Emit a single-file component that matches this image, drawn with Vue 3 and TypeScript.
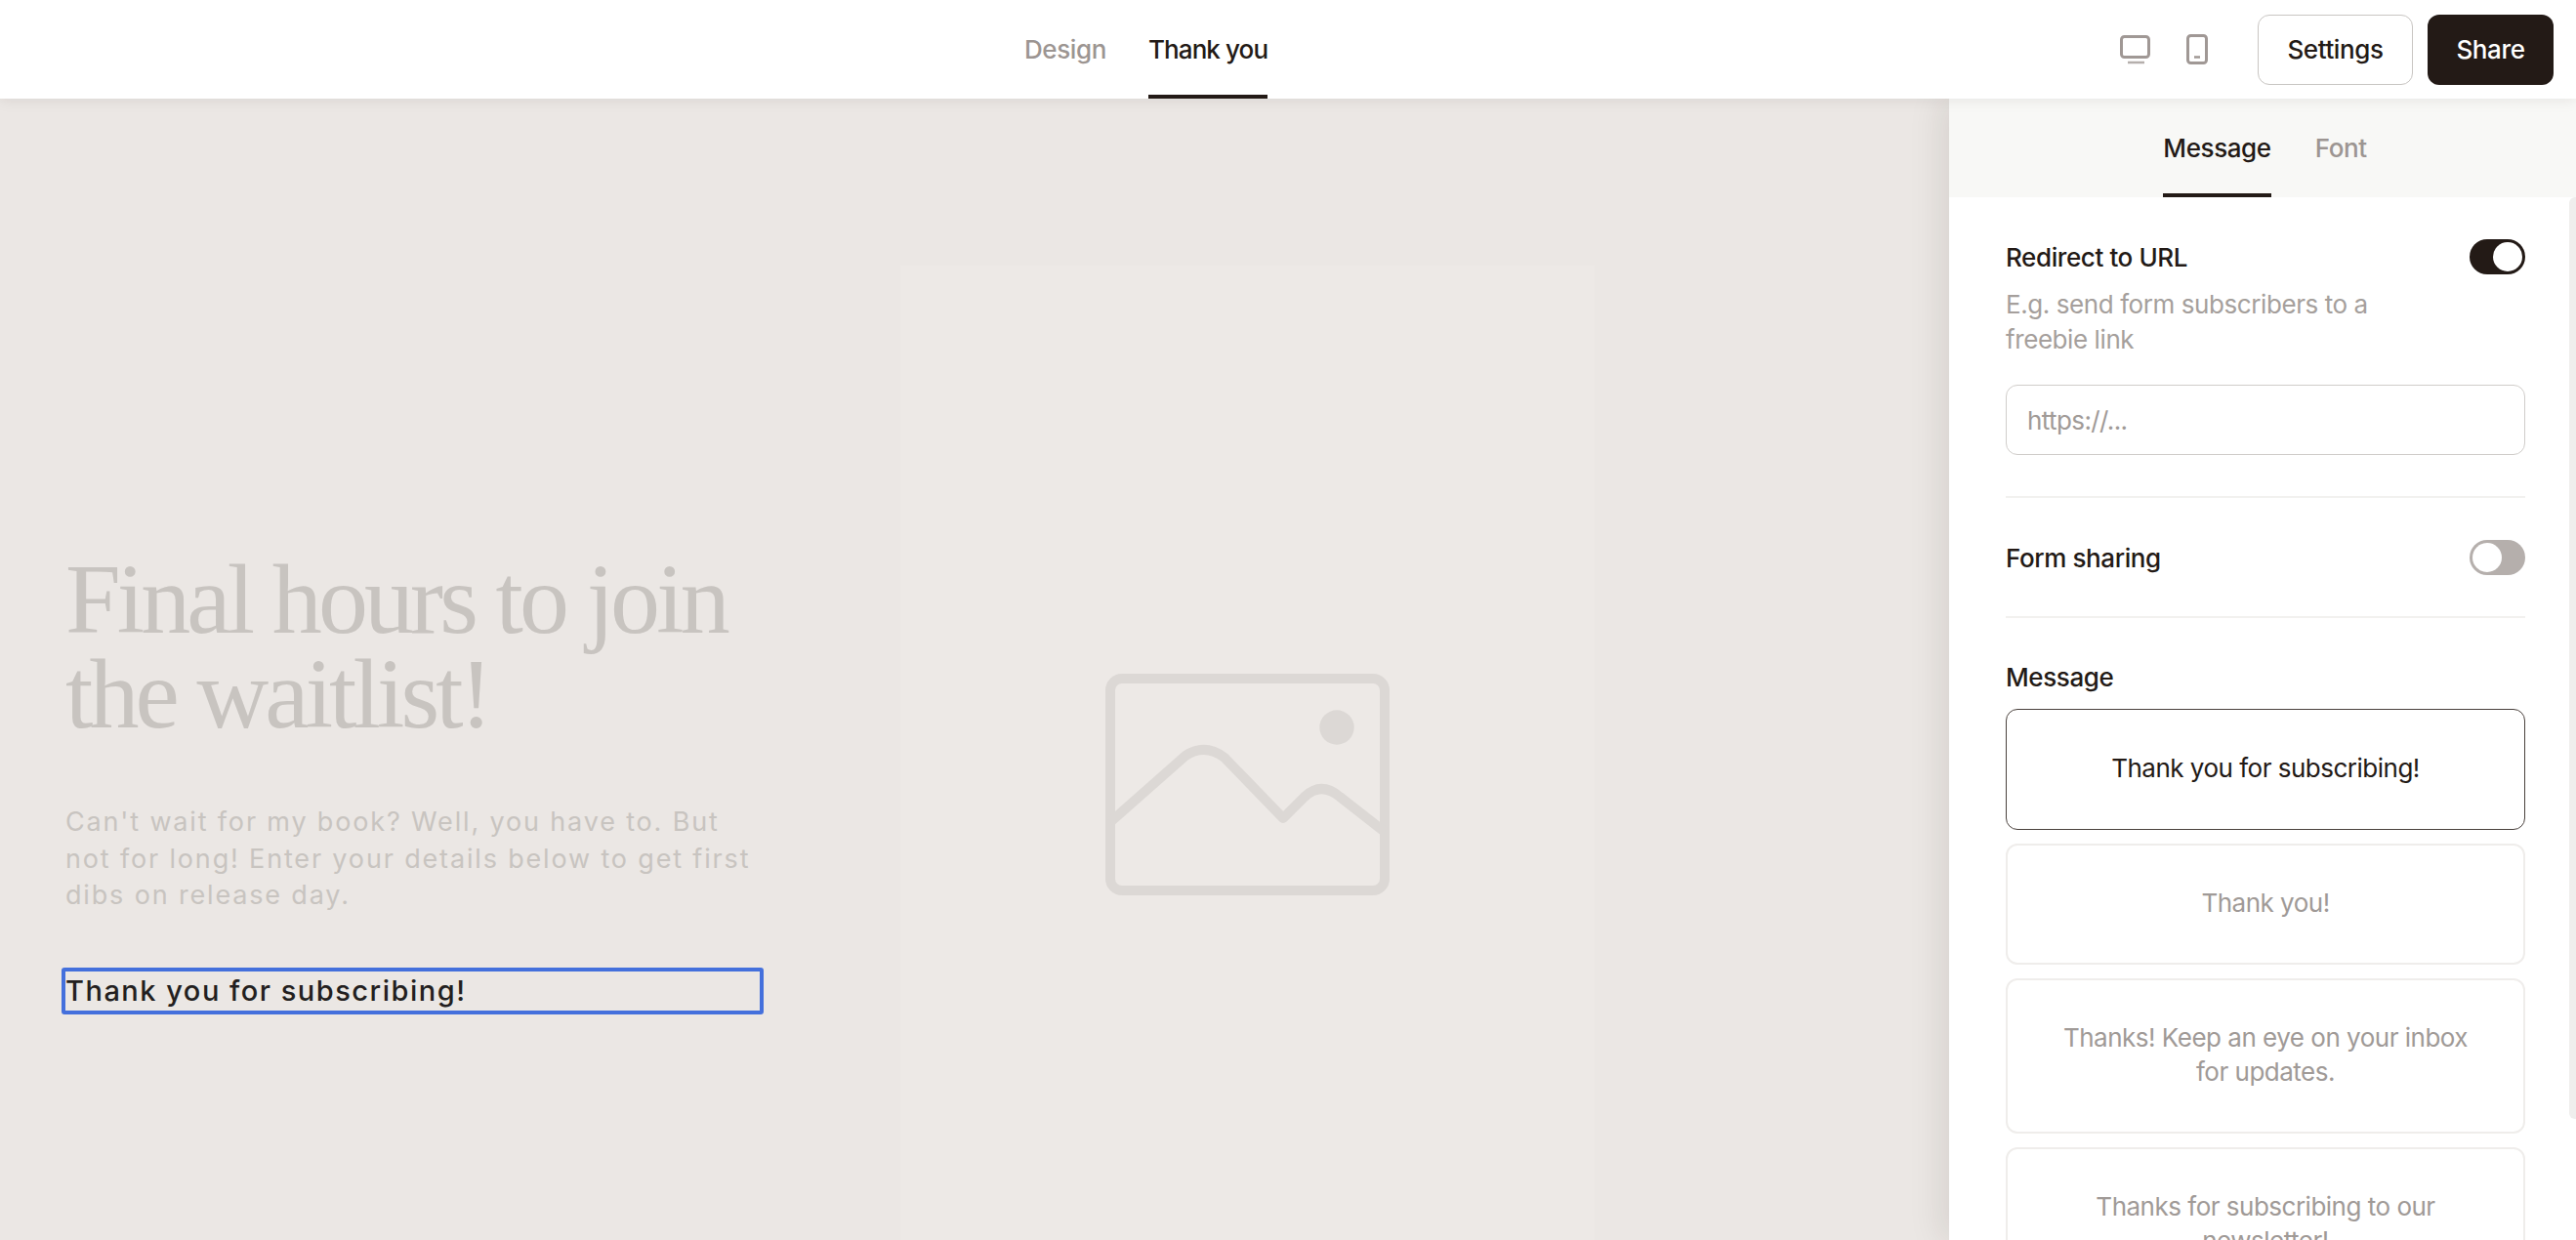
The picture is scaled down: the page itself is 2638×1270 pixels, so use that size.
<script setup lang="ts">
import { ref } from 'vue'

interface MessageOption {
  text: string
  active?: boolean
}

const redirect = ref(true)
const sharing = ref(false)

const options: MessageOption[] = [
  { text: 'Thank you for subscribing!', active: true },
  { text: 'Thank you!' },
  { text: 'Thanks! Keep an eye on your inbox for updates.' },
  { text: 'Thanks for subscribing to our newsletter!' },
]
</script>

<template>
  <div class="page">
    <header class="topbar">
      <nav class="tabs">
        <span class="tab">Design</span>
        <span class="tab tab--active">Thank you</span>
      </nav>
      <div class="actions">
        <svg class="device device--desktop" width="32" height="30" viewBox="0 0 32 30" fill="none">
          <rect x="1.5" y="1.5" width="28" height="21" rx="3" stroke="#a09895" stroke-width="3" />
          <path d="M8 28h17" stroke="#b5afac" stroke-width="2.5" />
        </svg>
        <svg class="device device--phone" width="22" height="31" viewBox="0 0 22 31" fill="none">
          <rect x="1.5" y="1.5" width="19" height="28" rx="3" stroke="#a09895" stroke-width="3" />
          <path d="M8 23.5h6" stroke="#a09895" stroke-width="2.5" />
        </svg>
        <button class="btn btn--ghost" type="button">Settings</button>
        <button class="btn btn--solid" type="button">Share</button>
      </div>
    </header>

    <main class="body">
      <section class="canvas">
        <div class="copy">
          <h1 class="headline">Final hours to join the waitlist!</h1>
          <p class="lead">Can't wait for my book? Well, you have to. But not for long! Enter your details below to get first dibs on release day.</p>
          <div class="thanks">Thank you for subscribing!</div>
        </div>
        <div class="photo">
          <svg width="291" height="227" viewBox="0 0 291 227" fill="none" stroke="#dcd8d5" stroke-width="10" stroke-linejoin="round">
            <rect x="5" y="5" width="281" height="217" rx="12" />
            <path d="M5 152 L82 84 Q102 71 122 86 L182 148 L204 126 Q221 110 240 126 L286 162" />
            <circle cx="237" cy="55" r="17.7" fill="#dcd8d5" stroke="none" />
          </svg>
        </div>
      </section>

      <aside class="panel">
        <div class="panel-tabs">
          <span class="tab tab--active tab--panel">Message</span>
          <span class="tab tab--panel">Font</span>
        </div>
        <div class="panel-scroll">
          <div class="panel-content">
            <div class="row">
              <span class="label">Redirect to URL</span>
              <span class="toggle" :class="{ 'toggle--on': redirect }"></span>
            </div>
            <p class="hint">E.g. send form subscribers to a freebie link</p>
            <input class="url" type="text" placeholder="https://..." />
            <hr class="rule" />
            <div class="row">
              <span class="label">Form sharing</span>
              <span class="toggle" :class="{ 'toggle--on': sharing }"></span>
            </div>
            <hr class="rule" />
            <div class="label label--block">Message</div>
            <div class="options">
              <div
                v-for="option in options"
                :key="option.text"
                class="option"
                :class="{ 'option--active': option.active }"
              >
                <span>{{ option.text }}</span>
              </div>
            </div>
          </div>
          <div class="scrollbar"></div>
        </div>
      </aside>
    </main>
  </div>
</template>

<style>
html,
body {
  margin: 0;
  overflow: hidden;
}
</style>

<style scoped>
.page {
  display: flex;
  flex-direction: column;
  height: 100vh;
  overflow: hidden;
  background: #fff;
  color: #231a16;
  font-family: Inter, 'Liberation Sans', sans-serif;
  font-size: 26px;
}

/* top bar */
.topbar {
  position: relative;
  z-index: 3;
  display: flex;
  align-items: center;
  flex: none;
  height: 101px;
  background: #fff;
  box-shadow: 0 2px 14px rgba(35, 26, 22, 0.08);
}

.tabs {
  display: flex;
  gap: 43px;
  height: 100%;
  margin-left: 1049px;
}

.tab {
  display: flex;
  align-items: center;
  height: 100%;
  box-sizing: border-box;
  border-bottom: 4px solid transparent;
  padding-top: 4px;
  color: #9c9592;
  font-weight: 500;
  letter-spacing: -0.4px;
}

.tab--active {
  border-bottom-color: #231a16;
  color: #231a16;
}

.tabs .tab--active {
  letter-spacing: -0.9px;
}

.actions {
  display: flex;
  align-items: center;
  margin-left: auto;
  padding-right: 23px;
}

.device--desktop {
  margin-right: 36px;
}

.device--phone {
  margin-right: 51px;
}

.btn {
  height: 72px;
  box-sizing: border-box;
  border-radius: 12px;
  font: 500 26px Inter, 'Liberation Sans', sans-serif;
  letter-spacing: -0.4px;
}

.btn--ghost {
  width: 159px;
  margin-right: 15px;
  border: 1.5px solid #c8c5c2;
  background: #fff;
  color: #231a16;
}

.btn--solid {
  width: 129px;
  border: 0;
  background: #231a16;
  color: #fff;
}

/* body */
.body {
  display: flex;
  flex: 1;
  min-height: 0;
}

.canvas {
  display: flex;
  flex: 1;
  min-width: 0;
  overflow: hidden;
  background: #ebe7e4;
}

.copy {
  flex: none;
  width: 922px;
  box-sizing: border-box;
  padding: 464px 0 0 67px;
}

.headline {
  width: 720px;
  margin: 0;
  color: #c8c4c0;
  font: 400 102px/97px 'Liberation Serif', serif;
  letter-spacing: -3.9px;
}

.lead {
  width: 708px;
  margin: 64px 0 0;
  color: #c8c4c0;
  font-size: 27px;
  line-height: 37.5px;
  letter-spacing: 1.84px;
}

.thanks {
  width: 719px;
  height: 48px;
  box-sizing: border-box;
  margin: 55px 0 0 -4px;
  border: 4px solid #4470dc;
  border-radius: 3px;
  color: #231f20;
  font-size: 29px;
  font-weight: 500;
  line-height: 40px;
  letter-spacing: 1.5px;
}

.photo {
  display: flex;
  align-items: center;
  justify-content: center;
  flex: none;
  width: 711px;
  height: 1063px;
  margin-top: 171px;
  background: #ede9e6;
}

/* settings panel */
.panel {
  position: relative;
  z-index: 2;
  display: flex;
  flex-direction: column;
  flex: none;
  width: 642px;
  background: #f8f8f6;
  box-shadow: -8px 0 32px rgba(35, 26, 22, 0.1);
}

.panel-tabs {
  display: flex;
  justify-content: center;
  flex: none;
  gap: 45px;
  height: 101px;
  padding-left: 5px;
}

.panel-scroll {
  display: flex;
  flex: 1;
  min-height: 0;
  overflow: hidden;
  background: #fff;
}

.panel-content {
  flex: 1;
  min-width: 0;
  padding: 43px 45px 0 58px;
}

.scrollbar {
  flex: none;
  width: 7px;
  height: 944px;
  border-radius: 6px 0 0 6px;
  background: #efeeed;
}

.row {
  display: flex;
  align-items: center;
  justify-content: space-between;
}

.label {
  color: #231a16;
  font-weight: 500;
  letter-spacing: -0.4px;
}

.label--block {
  line-height: 36px;
}

.toggle {
  position: relative;
  flex: none;
  width: 57px;
  height: 36px;
  border-radius: 18px;
  background: #b5afac;
}

.toggle::after {
  content: '';
  position: absolute;
  top: 3px;
  left: 3px;
  width: 30px;
  height: 30px;
  border-radius: 50%;
  background: #fff;
}

.toggle--on {
  background: #231a16;
}

.toggle--on::after {
  left: 24px;
}

.hint {
  width: 400px;
  margin: 13px 0 0;
  color: #a59f9c;
  line-height: 36px;
  letter-spacing: -0.42px;
}

.url {
  display: block;
  width: 100%;
  height: 72px;
  box-sizing: border-box;
  margin-top: 28px;
  border: 1.5px solid #d0cdca;
  border-radius: 12px;
  padding: 0 21px;
  outline: none;
  font: 400 26px Inter, 'Liberation Sans', sans-serif;
  letter-spacing: -0.6px;
}

.url::placeholder {
  color: #a09a97;
  opacity: 1;
}

.rule {
  height: 2px;
  margin: 42px 0 43px;
  border: 0;
  background: #f2f1ef;
}

.options {
  display: flex;
  flex-direction: column;
  gap: 14px;
  margin-top: 14px;
}

.option {
  display: flex;
  align-items: center;
  justify-content: center;
  flex: none;
  min-height: 124px;
  box-sizing: border-box;
  border: 2px solid #efedeb;
  border-radius: 12px;
  padding: 41px 40px 44px;
  color: #a09a97;
  line-height: 35px;
  text-align: center;
  letter-spacing: -0.5px;
}

.option--active {
  border-color: #4a413d;
  border-width: 1.5px;
  color: #231a16;
}
</style>
